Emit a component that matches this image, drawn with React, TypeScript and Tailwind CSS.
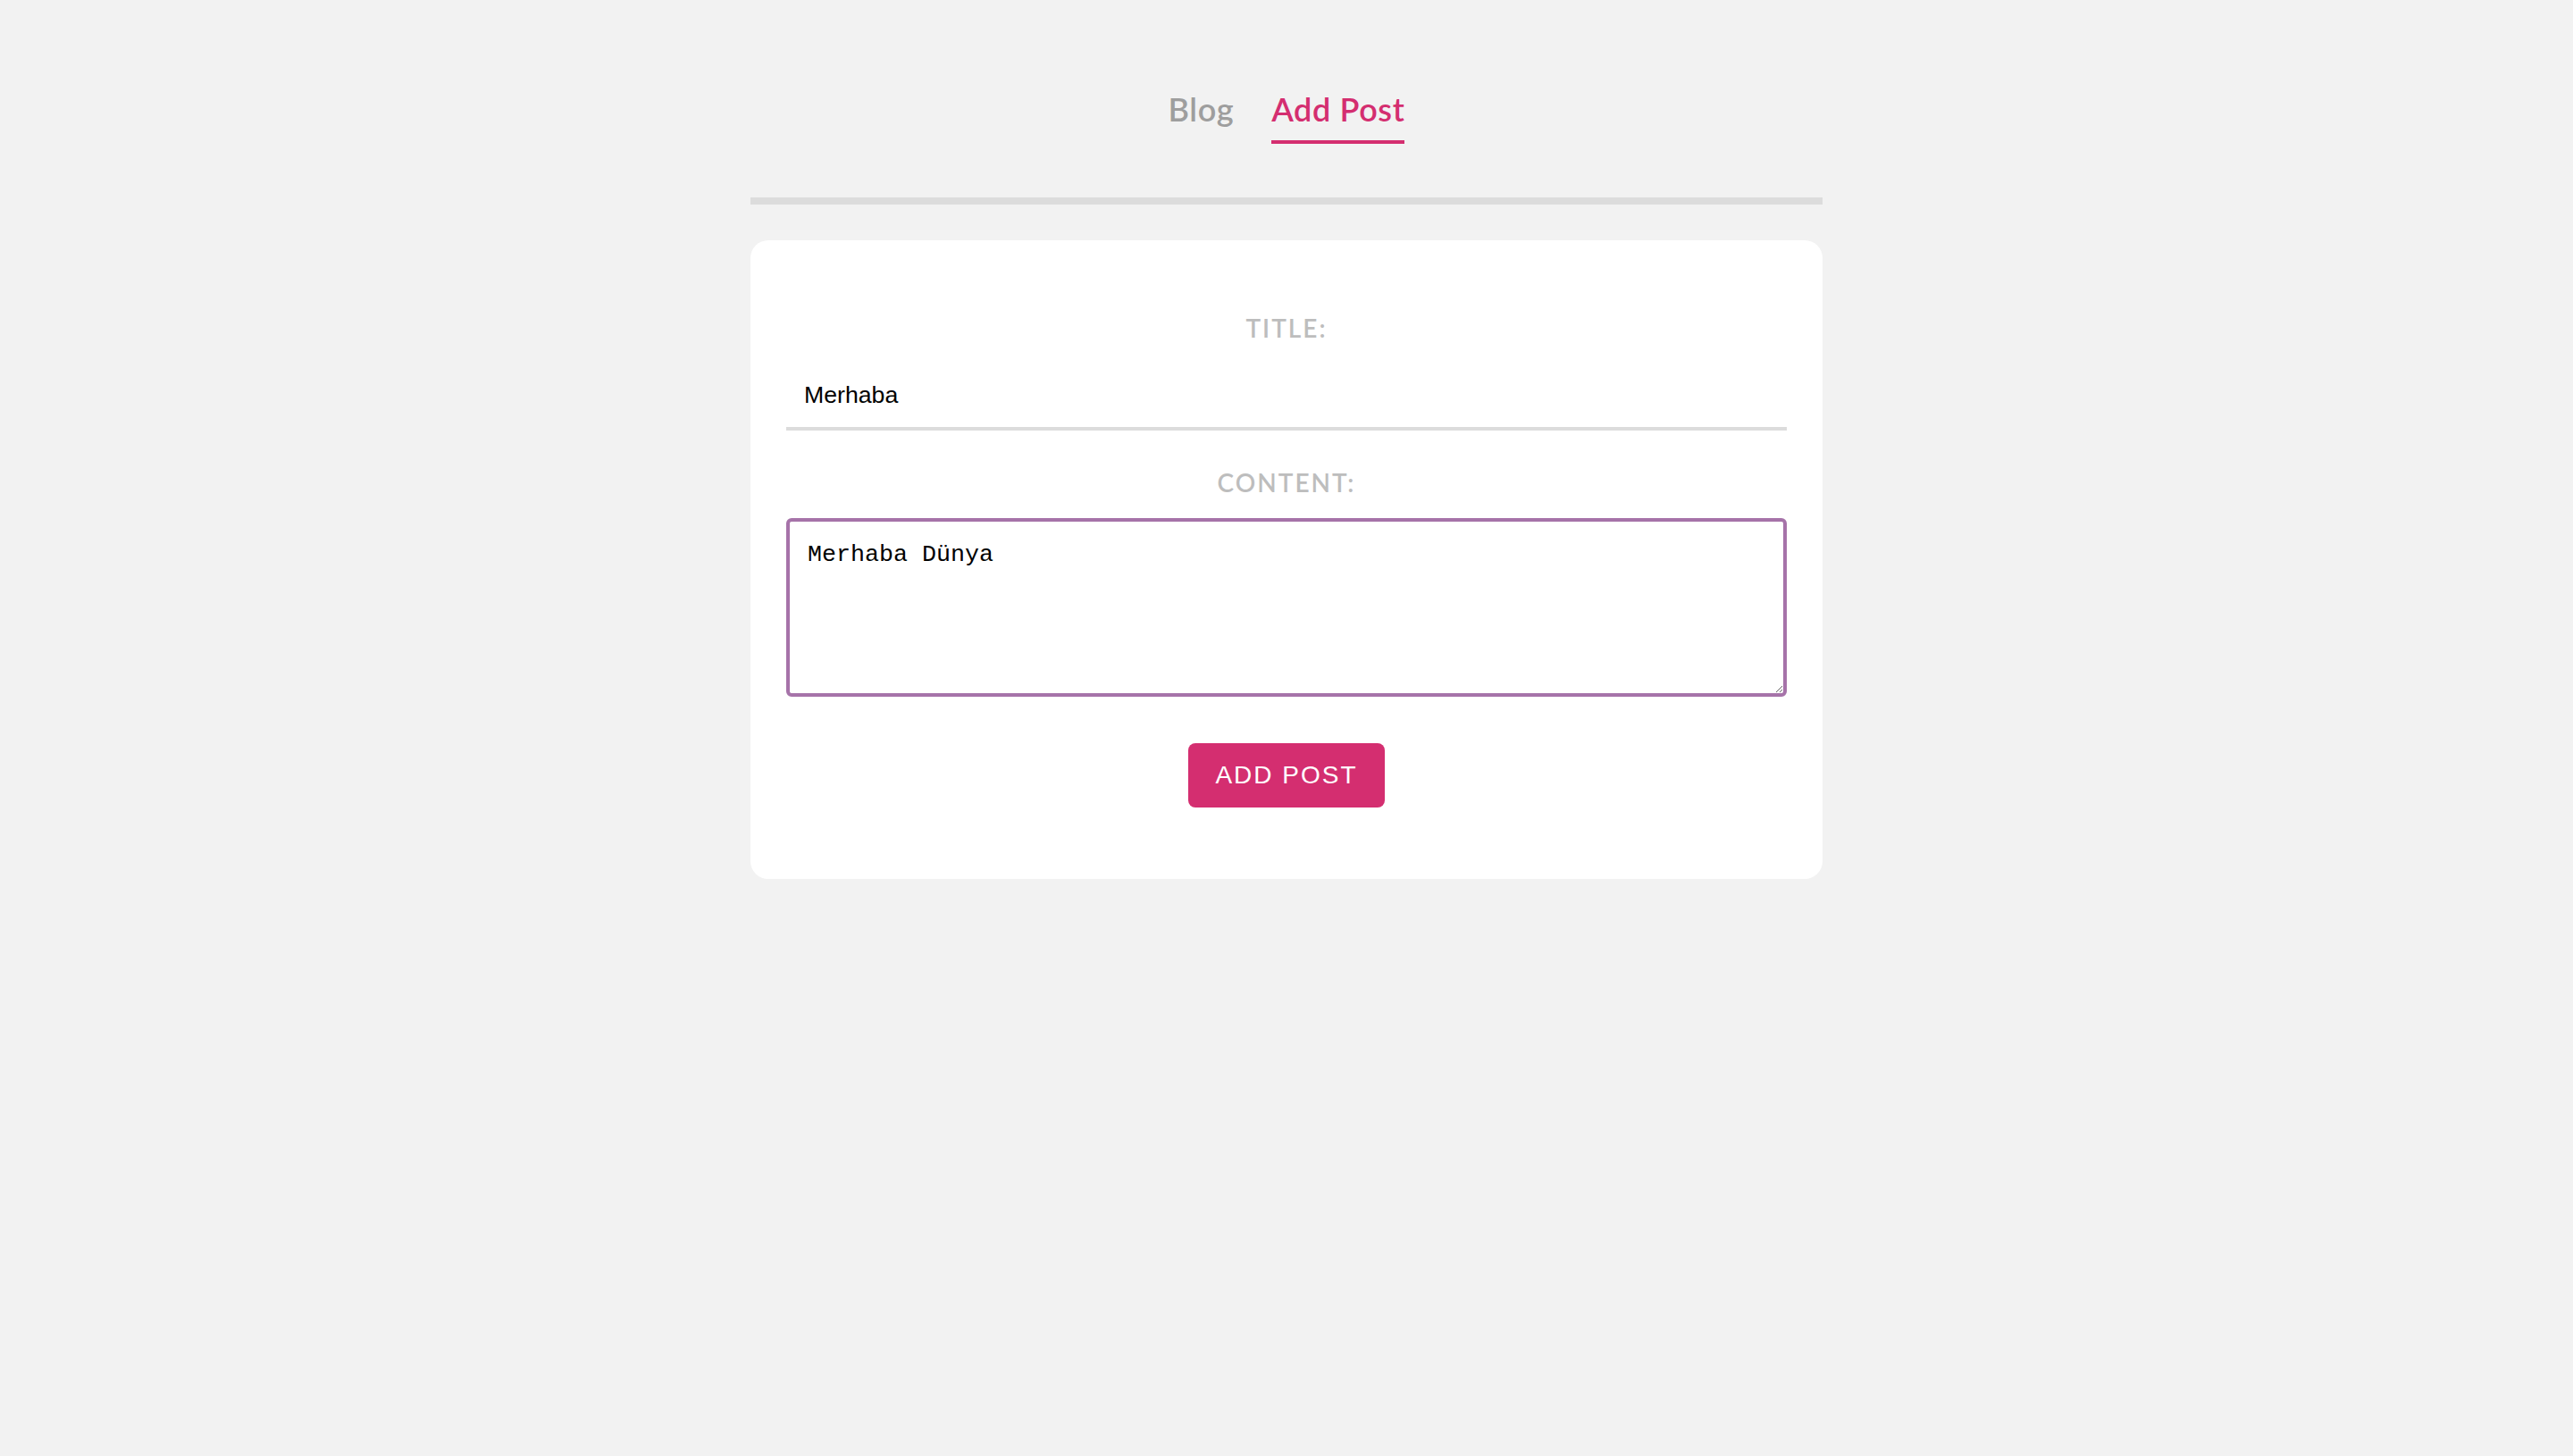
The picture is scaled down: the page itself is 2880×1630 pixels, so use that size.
import { useEffect, useRef, useState } from 'react'

const navItems = [
  { label: 'Blog', active: false },
  { label: 'Add Post', active: true },
]

export default function App() {
  const [title, setTitle] = useState('Merhaba')
  const [content, setContent] = useState('Merhaba Dünya')
  const areaRef = useRef<HTMLTextAreaElement>(null)

  useEffect(() => {
    const el = areaRef.current
    if (!el) return
    el.focus()
    el.setSelectionRange(el.value.length, el.value.length)
  }, [])

  return (
    <div className="min-h-screen bg-[#f2f2f2] pt-[104px]">
      {/* top nav */}
      <nav className="flex justify-center gap-[42px] font-['Lato',sans-serif] text-[36px] font-semibold leading-none tracking-[0.6px]">
        {navItems.map(item => (
          <a
            key={item.label}
            href="#"
            className={`pb-[17px] ${
              item.active
                ? 'text-[#d42e70] border-b-4 border-[#d42e70]'
                : 'text-[#9e9e9e] border-b-4 border-transparent'
            }`}
          >
            {item.label}
          </a>
        ))}
      </nav>

      <div className="mx-auto w-[1200px] mt-[60px]">
        <div className="h-2 bg-[#dcdcdc]" />

        <form
          onSubmit={e => e.preventDefault()}
          className="mt-10 bg-white rounded-[20px] px-10 pt-[84px] pb-20 flex flex-col items-center"
        >
          <label className="font-['Lato',sans-serif] text-[28px] font-semibold leading-none tracking-[2px] text-[#bdbdbd]">
            TITLE:
          </label>
          <input
            value={title}
            onChange={e => setTitle(e.target.value)}
            className="mt-[30px] w-full px-5 pt-[11px] pb-4 border-b-4 border-[#dcdcdc] font-['Liberation_Sans',Arial,sans-serif] text-[26.67px] text-black outline-none"
          />

          <label className="mt-[44px] font-['Lato',sans-serif] text-[28px] font-semibold leading-none tracking-[2px] text-[#bdbdbd]">
            CONTENT:
          </label>
          <textarea
            ref={areaRef}
            value={content}
            onChange={e => setContent(e.target.value)}
            className="mt-[26px] w-full h-[200px] px-5 pt-[17px] pb-5 border-4 border-[#a673a9] rounded-[6px] font-['Liberation_Mono','Courier_New',monospace] text-[26.67px] text-black outline-none"
          />

          <button
            type="submit"
            className="mt-[52px] w-[220px] h-[72px] rounded-[8px] bg-[#d42e70] text-white font-['Liberation_Sans',Arial,sans-serif] text-[28px] tracking-[2px]"
          >
            ADD POST
          </button>
        </form>
      </div>
    </div>
  )
}
